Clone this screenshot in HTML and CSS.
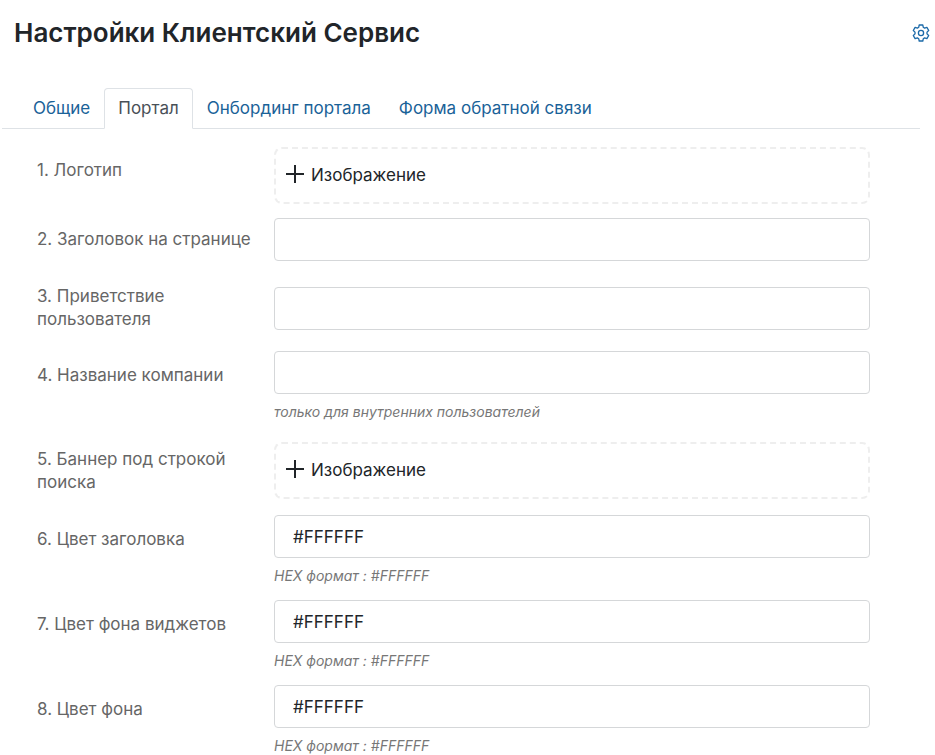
FILE: index.html
```html
<!DOCTYPE html>
<html lang="ru">
<head>
<meta charset="utf-8">
<meta name="viewport" content="width=device-width, initial-scale=1">
<title>Настройки Клиентский Сервис</title>
<link rel="stylesheet" href="styles.css">
</head>
<body>
<header class="header">
  <h1 class="title">Настройки Клиентский Сервис</h1>
  <button class="gear" type="button" aria-label="Настройки">
    <svg viewBox="0 0 18 18" width="18" height="18" fill="none" stroke="currentColor" stroke-width="1.3" stroke-linejoin="round" aria-hidden="true">
      <path d="M7.200 1h3.600l.5 2.300 1.300.8 2.300-.7 1.800 3.100L15 8.100v1.800l1.700 1.600-1.800 3.100-2.300-.7-1.300.8-.5 2.300H7.200l-.5-2.300-1.300-.8-2.300.7-1.800-3.100L3 9.900V8.100L1.300 6.500l1.800-3.100 2.300.7 1.300-.8z"/>
      <circle cx="9" cy="9" r="2.600"/>
    </svg>
  </button>
</header>
<nav class="tabs">
  <a class="tab" href="#general">Общие</a>
  <a class="tab tab-active" href="#portal" aria-current="page">Портал</a>
  <a class="tab" href="#onboarding">Онбординг портала</a>
  <a class="tab" href="#feedback">Форма обратной связи</a>
</nav>
<form class="form" id="portal">
  <div class="row row-start">
    <label class="label" for="logo">1. Логотип</label>
    <button class="upload" id="logo" type="button">
      <svg class="plus" viewBox="0 0 18 18" width="18" height="18" stroke="currentColor" stroke-width="2" aria-hidden="true"><path d="M0 9h18M9 0v18"/></svg>
      <span>Изображение</span>
    </button>
  </div>
  <div class="row row-loose">
    <label class="label" for="heading">2. Заголовок на странице</label>
    <input class="input" id="heading" type="text">
  </div>
  <div class="row row-medium">
    <label class="label" for="greeting">3. Приветствие пользователя</label>
    <input class="input" id="greeting" type="text">
  </div>
  <div class="row row-hinted row-medium">
    <label class="label" for="company">4. Название компании</label>
    <input class="input" id="company" type="text" aria-describedby="company-hint">
    <em class="hint" id="company-hint">только для внутренних пользователей</em>
  </div>
  <div class="row row-snug">
    <label class="label" for="banner">5. Баннер под строкой поиска</label>
    <button class="upload" id="banner" type="button">
      <svg class="plus" viewBox="0 0 18 18" width="18" height="18" stroke="currentColor" stroke-width="2" aria-hidden="true"><path d="M0 9h18M9 0v18"/></svg>
      <span>Изображение</span>
    </button>
  </div>
  <div class="row row-hinted">
    <label class="label" for="heading-color">6. Цвет заголовка</label>
    <input class="input" id="heading-color" type="text" value="#FFFFFF" aria-describedby="heading-color-hint">
    <em class="hint" id="heading-color-hint">HEX формат : #FFFFFF</em>
  </div>
  <div class="row row-hinted">
    <label class="label" for="widget-color">7. Цвет фона виджетов</label>
    <input class="input" id="widget-color" type="text" value="#FFFFFF" aria-describedby="widget-color-hint">
    <em class="hint" id="widget-color-hint">HEX формат : #FFFFFF</em>
  </div>
  <div class="row row-hinted">
    <label class="label" for="background-color">8. Цвет фона</label>
    <input class="input" id="background-color" type="text" value="#FFFFFF" aria-describedby="background-color-hint">
    <em class="hint" id="background-color-hint">HEX формат : #FFFFFF</em>
  </div>
</form>
</body>
</html>
```
FILE: styles.css
```css
* {
  box-sizing: border-box;
}

body {
  margin: 0;
  background: #fff;
  color: #212529;
  font-family: Inter, "Liberation Sans", sans-serif;
  font-size: 17px;
  line-height: 23px;
}

.header {
  display: flex;
  align-items: center;
  justify-content: space-between;
  padding: 16px 5px 0 14px;
}

.title {
  margin: 0;
  font-size: 26px;
  font-weight: 600;
  line-height: 34px;
}

.gear {
  display: flex;
  padding: 0;
  border: 0;
  background: none;
  color: #1b69a8;
}

.tabs {
  display: flex;
  margin: 38px 15px 0 2px;
  padding-left: 17px;
  border-bottom: 1px solid #dee2e6;
}

.tab {
  margin-bottom: -1px;
  padding: 8px 13px;
  border: 1px solid transparent;
  border-radius: 4px 4px 0 0;
  color: #1a6298;
  text-decoration: none;
}

.tab-active {
  border-color: #dee2e6 #dee2e6 #fff;
  background: #fff;
  color: #495057;
}

.form {
  padding: 18px 65px 0 37px;
}

.row {
  display: grid;
  grid-template-columns: 217px minmax(0, 1fr);
  column-gap: 20px;
  align-items: center;
  margin-bottom: 14px;
}

.row-start {
  align-items: start;
}

.row-start .label {
  padding-top: 12px;
}

.row-snug {
  margin-bottom: 16px;
}

.row-medium {
  margin-bottom: 20px;
}

.row-loose {
  margin-bottom: 24px;
}

.row-hinted .label {
  padding-top: 6px;
}

.label {
  color: #666;
}

.input {
  width: 100%;
  height: 43px;
  padding: 0 18px;
  border: 1px solid #d5d7d9;
  border-radius: 4px;
  background: #fff;
  color: #212529;
  font: inherit;
}

.upload {
  display: flex;
  align-items: center;
  gap: 7px;
  width: 100%;
  height: 57px;
  padding: 0 10px;
  border: 2px dashed #eee;
  border-radius: 8px;
  background: #fff;
  color: #212529;
  font: inherit;
}

.plus {
  margin-bottom: 4px;
}

.hint {
  grid-column: 2;
  margin-top: 8px;
  color: #777;
  font-size: 14px;
  line-height: 20px;
}
```
